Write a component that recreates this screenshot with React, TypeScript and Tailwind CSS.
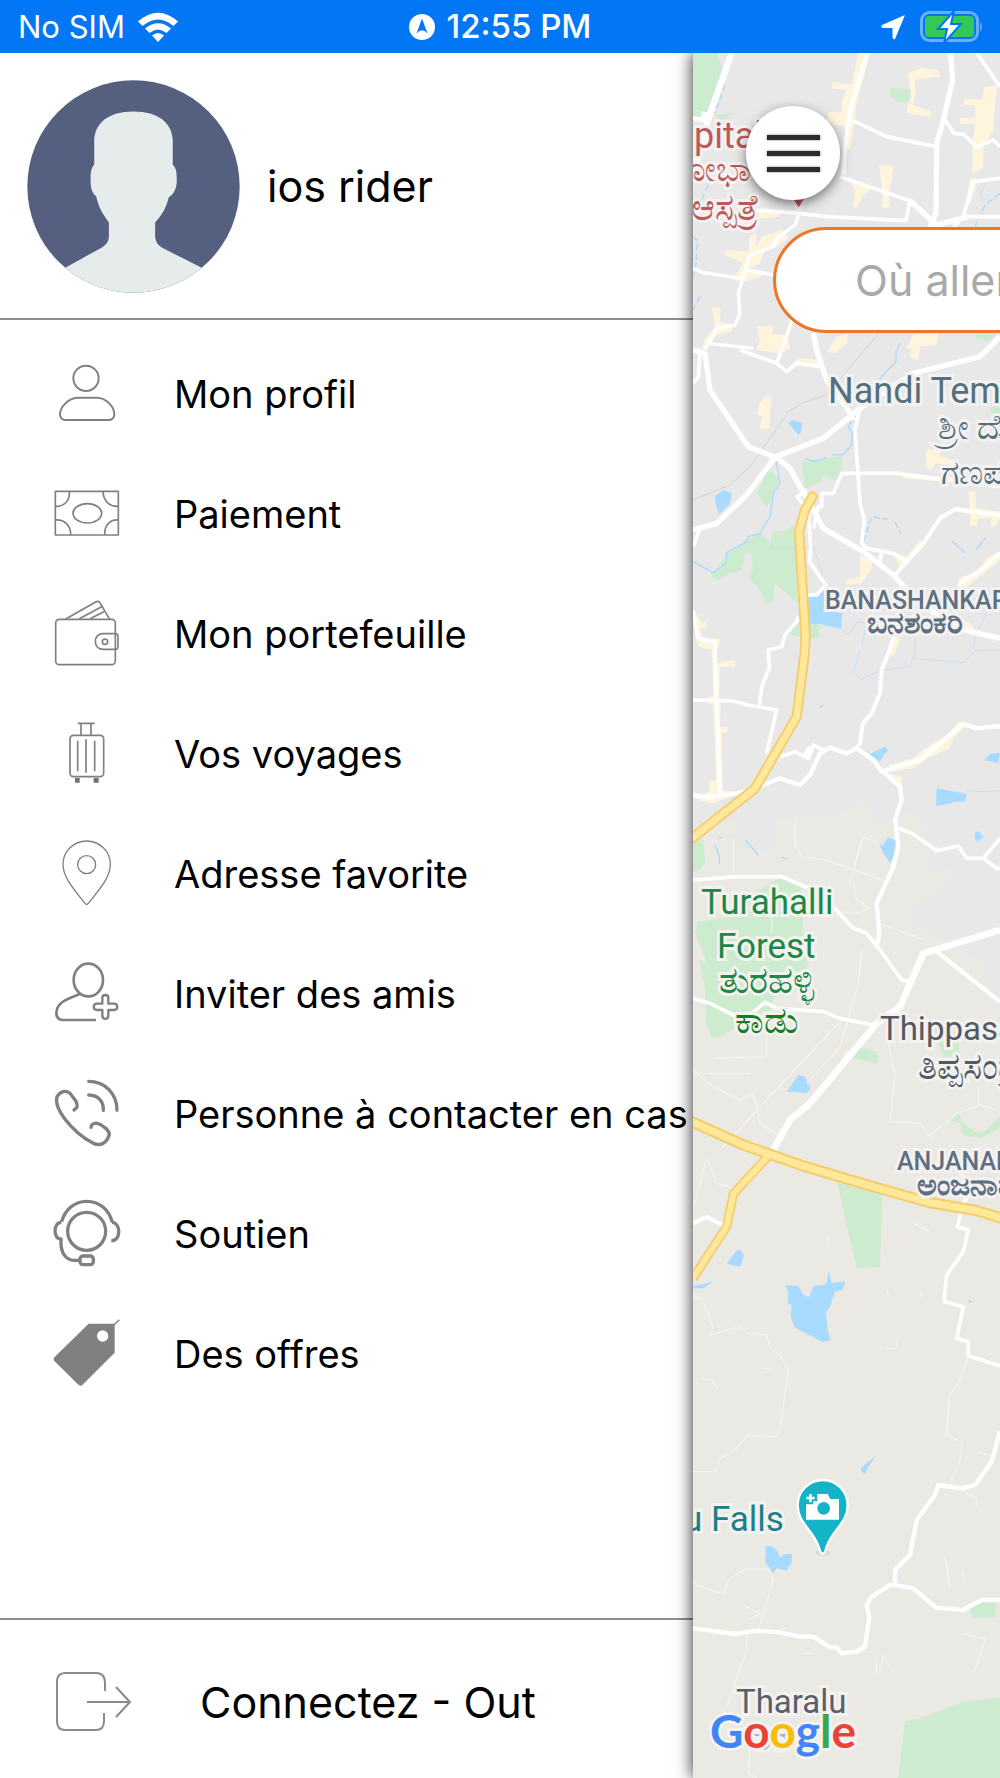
import type { ReactNode } from 'react'

type MenuItem = {
  label: string
  icon: ReactNode
}

function Icon({ box = '66 57 210 210', width = 5, children }: { box?: string; width?: number; children: ReactNode }) {
  return (
    <svg
      viewBox={box}
      className="size-[70px] shrink-0"
      fill="none"
      stroke="#808080"
      strokeWidth={width}
      strokeLinejoin="round"
      aria-hidden="true"
    >
      {children}
    </svg>
  )
}

const menu: MenuItem[] = [
  {
    label: 'Mon profil',
    icon: (
      <Icon width={6}>
        <circle cx="168" cy="115" r="38" />
        <path d="M145 173H200C230 173 253 202 253 223C253 233 246 240 235 240H108C97 240 90 233 90 223C90 202 115 173 145 173Z" />
      </Icon>
    ),
  },
  {
    label: 'Paiement',
    icon: (
      <Icon box="66 417 210 210">
        <rect x="76" y="454" width="189" height="131" />
        <ellipse cx="172" cy="520" rx="43" ry="29" />
        <path d="M118 454C120 482 103 500 76 499M219 454C220 483 238 500 265 499M76 540C103 538 123 556 122 585M265 540C240 538 223 556 224 585" />
      </Icon>
    ),
  },
  {
    label: 'Mon portefeuille',
    icon: (
      <Icon box="66 777 210 210">
        <rect x="77" y="838" width="179" height="136" rx="11" />
        <path d="M106 838L197 786Q206 781 211 790L239 838M148 836L215 800M180 836L222 815" />
        <path d="M256 881H220C205 881 196 891 196 904C196 918 205 928 220 928H257Q264 928 264 919V890Q264 881 256 881Z" />
        <circle cx="225" cy="905" r="8" />
      </Icon>
    ),
  },
  {
    label: 'Vos voyages',
    icon: (
      <Icon>
        <path d="M143 70H194M153 70V106M183 70V106M143 122V214M168 118V218M194 122V214" />
        <rect x="120" y="106" width="101" height="124" rx="10" />
        <path d="M135 234H149V248H135ZM191 234H206V248H191Z" fill="#707070" stroke="none" />
      </Icon>
    ),
  },
  {
    label: 'Adresse favorite',
    icon: (
      <Icon box="66 417 210 210" width={4}>
        <path d="M170 614Q166 612 160 604C130 565 99 532 99 493C99 454 131 423 170 423C209 423 241 454 241 493C241 532 210 565 180 604Q174 612 170 614Z" />
        <circle cx="170" cy="494" r="27" />
      </Icon>
    ),
  },
  {
    label: 'Inviter des amis',
    icon: (
      <Icon box="66 777 210 210" width={8}>
        <ellipse cx="175" cy="840" rx="44" ry="49" />
        <path d="M149 882L115 896C91 906 79 919 79 939C79 952 86 960 100 960H198" />
        <path
          strokeWidth="7"
          d="M217 894C217 882 235 882 235 894V911H252C265 911 265 930 252 930H235V946C235 960 217 960 217 946V930H201C188 930 188 911 201 911H217Z"
        />
      </Icon>
    ),
  },
  {
    label: "Personne à contacter en cas d'urgence",
    icon: (
      <Icon width={10}>
        <path
          strokeLinecap="round"
          d="M132 150C143 144 144 138 138 124L120 100C108 90 91 93 81 110C76 126 85 150 104 176C130 210 156 232 190 250C212 259 229 250 237 227C242 214 227 204 212 194C197 186 184 190 183 202"
        />
        <path strokeLinecap="round" d="M176 64C225 64 261 101 261 151M176 105C205 106 221 123 220 151" />
      </Icon>
    ),
  },
  {
    label: 'Soutien',
    icon: (
      <Icon box="66 417 210 210" width={10}>
        <circle cx="170" cy="514" r="57" />
        <path d="M95 485C105 449 133 424 170 424C208 424 237 449 247 487M94 487C69 486 69 539 93 537V548C93 580 108 600 132 601H148M246 487C273 488 274 543 244 542" />
        <rect x="150" y="588" width="40" height="26" rx="9" />
      </Icon>
    ),
  },
  {
    label: 'Des offres',
    icon: (
      <Icon box="66 777 210 210" width={4}>
        <path
          fill="#808080"
          stroke="none"
          fillRule="evenodd"
          d="M176 791H254V878L157 975Q152 980 146 975L73 903Q68 898 73 892ZM218 811A17 17 0 1 0 218 845A17 17 0 1 0 218 811Z"
        />
        <path d="M252 794L268 779" />
      </Icon>
    ),
  },
]

const labels = [
  { text: 'pital', style: 'left-px top-[65px] text-[36px] text-[#bb5a5c]' },
  { text: 'ಶೋಭಾ', style: '-left-[29px] top-[99px] text-[34px] text-[#bb5a5c]' },
  { text: 'ಆಸ್ಪತ್ರೆ', style: '-left-[2px] top-[137px] text-[36px] text-[#bb5a5c]' },
  { text: 'Nandi Temple', style: 'left-[135px] top-[320px] text-[36px] text-[#55707c]' },
  { text: 'ಶ್ರೀ ದೊಡ್ಡ', style: 'left-[245px] top-[357px] text-[34px] text-[#55707c]' },
  { text: 'ಗಣಪತಿ', style: 'left-[248px] top-[402px] text-[34px] text-[#55707c]' },
  { text: 'BANASHANKARI', style: 'left-[132px] top-[535px] text-[25px] font-medium text-[#5f6f82]' },
  { text: 'ಬನಶಂಕರಿ', style: 'left-[174px] top-[555px] text-[30px] font-bold text-[#5f6f82]' },
  { text: 'Turahalli', style: 'left-[8px] top-[832px] text-[35px] text-[#1c8746]' },
  { text: 'Forest', style: 'left-[24px] top-[876px] text-[35px] text-[#1c8746]' },
  { text: 'ತುರಹಳ್ಳಿ', style: 'left-[26px] top-[910px] text-[36px] text-[#1c8746]' },
  { text: 'ಕಾಡು', style: 'left-[42px] top-[950px] text-[36px] text-[#118020]' },
  { text: 'Thippasandra', style: 'left-[187px] top-[959px] text-[33px] text-[#535a63]' },
  { text: 'ತಿಪ್ಪಸಂದ್ರ', style: 'left-[225px] top-[996px] text-[36px] text-[#535a63]' },
  { text: 'ANJANAPURA', style: 'left-[204px] top-[1096px] text-[25px] font-medium text-[#5f6f82]' },
  { text: 'ಅಂಜನಾಪುರ', style: 'left-[224px] top-[1117px] text-[30px] font-bold text-[#5f6f82]' },
  { text: 'u Falls', style: '-left-[10px] top-[1449px] text-[35px] text-[#1b8088]' },
  { text: 'Tharalu', style: 'left-[43px] top-[1632px] text-[33px] text-[#5a6069]' },
  { text: 'ತರಳು', style: 'left-[60px] top-[1668px] text-[34px] text-[#b5b5b5]' },
]

const google = [
  { char: 'G', style: 'text-[#4285f4]' },
  { char: 'o', style: 'text-[#ea4335]' },
  { char: 'o', style: 'text-[#fbbc05]' },
  { char: 'g', style: 'text-[#4285f4]' },
  { char: 'l', style: 'text-[#34a853]' },
  { char: 'e', style: 'text-[#ea4335]' },
]

function StatusBar() {
  return (
    <header className="relative z-20 grid h-[53px] shrink-0 grid-cols-3 items-center bg-[#0277f6] px-[18px] text-[31px] leading-none text-white">
      <div className="flex items-center gap-3">
        <span>No SIM</span>
        <svg viewBox="0 0 42 30" className="h-[30px] w-[42px]" fill="#fff" aria-label="Wi-Fi">
          <path d="M1 9.500Q21-8 41 9.500L36.500 14Q21 1 5.500 14Z" />
          <path d="M8 16.500Q21 6 34 16.500L29.500 21Q21 14 12.500 21Z" />
          <path d="M15 23.500Q21 18.500 27 23.500L21 30Z" />
        </svg>
      </div>
      <div className="flex items-center justify-center gap-3 text-[33px] font-medium">
        <svg viewBox="0 0 26 26" className="size-[26px]" aria-hidden="true">
          <circle cx="13" cy="13" r="13" fill="#fff" />
          <path d="M13 4.500L18.500 19.500Q13 13 7.500 19.500Z" fill="#0277f6" />
        </svg>
        <span>12:55 PM</span>
      </div>
      <div className="flex items-center justify-end gap-3">
        <svg viewBox="0 0 26 26" className="size-[26px]" fill="#fff" aria-hidden="true">
          <path d="M25 1L15 25Q13 26 12.500 23V14H3Q0 13 2 11Z" />
        </svg>
        <svg viewBox="0 0 64 32" className="h-[32px] w-[64px]" aria-label="Batterie">
          <rect x="3.500" y="1.500" width="56" height="28" rx="8" fill="none" stroke="#69aff9" strokeWidth="3" />
          <path d="M62 11Q66 15.500 62 21Z" fill="#69aff9" />
          <rect x="7" y="5" width="49" height="21" rx="4" fill="#34c759" />
          <path d="M36 0L20 18H29L26 32L43 13H33Z" fill="#fff" stroke="#0277f6" strokeWidth="2" />
        </svg>
      </div>
    </header>
  )
}

function Avatar() {
  return (
    <svg viewBox="80 60 640 640" className="size-[213px] shrink-0" aria-label="Photo de profil">
      <clipPath id="avatar">
        <circle cx="400" cy="380" r="319" />
      </clipPath>
      <g clipPath="url(#avatar)">
        <rect x="80" y="60" width="640" height="640" fill="#555f7f" />
        <path
          fill="#e6ecec"
          d="M400 155C475 155 518 190 518 245V315C530 325 530 345 530 365C530 385 520 405 506 412C498 445 485 465 465 488V530C467 550 475 558 492 567L605 624L640 720H160L195 624L305 563C320 553 326 545 326 528V488C305 460 295 440 288 410C275 400 271 385 271 360C271 340 272 325 282 315V245C282 190 325 155 400 155Z"
        />
      </g>
    </svg>
  )
}

function MapDrawing() {
  return (
    <svg
      viewBox="39 9 921 5175"
      preserveAspectRatio="xMinYMin slice"
      className="absolute inset-0 h-full w-full"
      fill="none"
      strokeLinejoin="round"
      aria-hidden="true"
    >
      <rect x="39" y="9" width="3000" height="6000" fill="#e8e8e8" />
      <path
        fill="#eae9e4"
        d="M39 2370L100 2315L165 2310L170 2390L280 2410L290 2310L480 2290L560 2245L580 2330L640 2300L700 2285L740 2340V2470L820 2450L780 2520L700 2560V2620L800 2680L910 2740L920 2800L960 2860H3000V6000H39Z"
      />

      {/* parks */}
      <g fill="#cdebcf">
        <path d="M39 9H110L128 60L82 195L39 203ZM105 195L160 190L120 212ZM630 115L692 117L685 157L650 155L632 140ZM885 850H955L925 872L890 868ZM465 345H482L475 358Z" />
        <path d="M365 1235L487 1218L483 1275L465 1290L430 1275L425 1295L375 1315ZM262 1258L300 1285L262 1372L232 1330ZM935 1070H960V1090H932Z" />
        <path d="M92 1580L140 1515L240 1448L270 1488L278 1445L320 1443L338 1425L345 1440L352 1660L285 1600L278 1658L258 1662L240 1620L205 1585L218 1560L215 1510L205 1502L193 1515L185 1562L150 1570L115 1590ZM325 1750L355 1720L420 1722L418 1765H370Z" />
        <path d="M39 2360L70 2370L75 2440L60 2460L39 2465ZM45 2650L55 2615L150 2600L245 2515L300 2484L362 2515L370 2640L365 2700L385 2740L380 2760L340 2830L280 2840L275 2880L230 2890L130 2955L98 2965L78 2920L75 2820L65 2760L55 2730L80 2740L70 2710Z" />
        <path d="M510 3005L530 2990L592 3005V3042L510 3020ZM760 2940L800 2930L840 2960L835 3020H790ZM805 3225L835 3190L850 3220L890 3250L920 3240L960 3200V3235L900 3265L850 3255L840 3220L820 3212ZM470 3390L607 3430L600 3650L530 3655L515 3590Z" />
        <path d="M675 5015L720 5005L850 4955L960 4943H1400V5300H640ZM868 4680L890 4655H950L945 4703H880Z" />
      </g>

      {/* built-up areas */}
      <g fill="#fef5dc">
        <path d="M535 9H570L555 70L530 160L510 300H495V230L440 215L445 187H485L487 150L500 120L455 115L457 95L515 105Z" />
        <path d="M683 70L720 55L778 60V80L735 85L705 90L707 125L700 165L755 185L750 200L680 188L683 165L695 140ZM915 110L950 107L940 240L910 290V350L895 365H877L878 285L885 222H840V203H885V165H852V147H905Z" />
        <path d="M510 390L545 395L570 420L545 440L530 475L520 470L525 420ZM598 345L640 350L635 395L625 430L630 470L605 475L608 440ZM870 385L892 385L885 420L870 460L858 452ZM232 480H290L300 500L240 505Z" />
        <path d="M210 555L230 552L228 590L245 560L305 540L325 565L290 590L255 600L240 640L210 655L245 665V680L185 695L160 690L190 640L135 615L140 600L205 605Z" />
        <path d="M95 770L122 775L120 815L160 825L155 845L110 855L90 885L65 900L75 865L105 835ZM230 828L280 830L275 852L320 855L330 895L300 910L230 900L240 870ZM470 860L505 850L500 880L465 910L440 905ZM700 855L775 850L770 885L720 890L715 930L690 920L695 895H680Z" />
        <path d="M260 1035L275 1045L270 1085V1135L240 1138L245 1100L232 1090L238 1060ZM350 925L430 930V955L340 945ZM740 1197L780 1200V1220L820 1230V1245L765 1240L755 1262L738 1250ZM665 1268L750 1278L960 1290V1315L850 1300L670 1285ZM865 1325L885 1322L888 1375L960 1385V1405L945 1430L930 1425L935 1405H895L890 1428L868 1425L873 1395L820 1370L870 1375Z" />
        <path d="M540 1515L578 1530L575 1555L545 1600L500 1605L497 1590L540 1580ZM640 1505L680 1520L720 1470L740 1480L660 1560ZM835 1585L895 1565L920 1525L960 1505V1530L900 1580L850 1620L840 1600ZM42 1680L65 1715H80V1735H60L65 1765L122 1768L110 1800V1840L165 1830V1850L120 1850L118 1950L122 1970L120 2030H143V2045L125 2050L128 2220L180 2230L95 2260L39 2245L88 2225V2195L108 2190L100 1965L82 1960V1945L100 1935L95 1800L55 1790L45 1750ZM750 1680L800 1690L880 1725V1750L780 1740ZM635 1755L660 1765L640 1820L620 1810Z" />
        <path d="M625 2145L700 2125L735 2095L800 2055L835 2015L868 2018L820 2065L810 2095L750 2120L700 2155L630 2165ZM620 2170L665 2180V2210H650ZM500 3000L520 3015L465 3080Z" />
      </g>

      {/* lakes and streams */}
      <g fill="#a9daff">
        <path d="M325 1120L335 1110L368 1118L362 1148L355 1155ZM105 1338L130 1320L155 1330L150 1360L118 1393L108 1365ZM385 1640L437 1618L440 1680L487 1690L483 1737L420 1722H387ZM418 1968L432 1965L425 1975Z" />
        <path d="M568 2112L615 2090L624 2100L598 2135L580 2120ZM912 2130L930 2112L960 2108L955 2140ZM770 2215L860 2232L855 2255H825L790 2265L768 2267ZM883 2350L895 2343L910 2360L895 2375L885 2368ZM597 2380L610 2382L625 2362L648 2372L640 2420L630 2440L610 2410ZM320 3125L355 3075L375 3080L392 3115L380 3130L345 3125Z" />
        <path d="M140 3640L172 3600H182L192 3615L180 3650L155 3645ZM316 3705L355 3708L370 3735L388 3742L400 3708L430 3705L440 3700L446 3665L455 3700L495 3693L490 3718L465 3725L450 3770L438 3785L443 3840L452 3870L430 3877L345 3833L332 3800L335 3765L323 3760L325 3730ZM39 3708L100 3695L70 3715H39ZM543 4255L560 4240L587 4217L565 4250L555 4272L545 4265ZM865 3750L880 3755L868 3760Z" />
        <path d="M258 4488L272 4488L290 4500L300 4522L315 4512H336L335 4540L318 4562L290 4555L280 4570L255 4535Z" />
      </g>
      <g stroke="#a9daff" strokeWidth="4">
        <path d="M648 900V935L600 985V1000M528 1095L505 1130L517 1150L515 1185L490 1213L455 1215M440 1222L405 1235L375 1225M289 1235L300 1300L280 1330L270 1400L240 1450L205 1460L200 1475L140 1508L137 1540L100 1568L39 1535M815 1472L855 1508M888 1498L918 1462M105 2385L118 2420V2442M115 2362H128M155 2362H165M196 2370L235 2415M303 2423L323 2426" />
        <path d="M135 105L105 190M85 405L62 455M39 560L52 570L48 640L39 690M60 740L39 780M660 880L648 905M960 430L915 465L885 530M550 1475L575 1400L625 1408M645 1415L662 1450" strokeDasharray="20 8" />
        <path d="M915 400L903 430L908 462M240 1450L280 1495L400 1492L425 1560V1620M485 1740L500 1755L535 1715L560 1722L545 1790M920 1690L890 1750L880 1800M705 1765V1810L690 1850L600 1862L545 1888L520 1870L540 1800M700 1825L850 1838L885 1802L960 1800M860 2222L910 2225L960 2222" strokeWidth="3" opacity=".55" />
      </g>
      <path stroke="#d4d4d4" strokeWidth="3" d="M39 1350L150 1305L215 1245L325 1085L370 1058L440 1035L600 845" />

      {/* minor tracks */}
      <g stroke="#f4f3ef" strokeWidth="4">
        <path d="M160 2360V2470M345 2310V2380L365 2420L440 2430L620 2495M550 2360L510 2500M550 2360L610 2385M545 2370L525 2440M520 2500L530 2550L570 2575L530 2590L480 2585M600 2620L730 2668M275 2600V2650M545 2700L535 2800L480 2990L380 3100M480 2915L400 3000L120 3300M39 3060L100 3110L180 3150L220 3130L240 3220L300 3260M110 3025L260 3020V2960M39 3070H210M620 2960L645 3080L630 3215L720 3220L760 3270M895 3170V3110M750 3255L830 3190L900 3165L950 3180" />
        <path d="M39 3740L65 3745L98 3830L92 3855L180 3830L205 3850L260 3855L270 3895L300 3915L325 3960L300 4140L290 4160L205 4155L165 4200L120 4225L108 4265H39M862 3925L840 3990L808 4040L800 4155L847 4177L840 4230L810 4300M39 4600L130 4632L145 4590L195 4557H265L280 4590L235 4740M200 4750V4800L140 4970M210 5090L205 5170L230 5184M78 3330L60 3400L45 3460M80 3325L110 3400L180 3420" />
        <path d="M725 3720V3745M620 3720L625 3738M655 3860L645 3898L618 3893M250 3955H280M65 3985L95 3990L115 4015M850 4750L915 4768L880 4870M600 4870L610 4815L630 4850M370 4810H400M590 4830V4870M180 4660L240 4690L205 4710M795 4520L810 4610M850 4560V4590M845 4320L890 4345V4370M895 4205L945 4220M700 3520L750 3545M440 3550L448 3580" />
      </g>

      {/* roads */}
      <g stroke="#fff" strokeWidth="11">
        <path strokeWidth="19" d="M155 9L90 190L39 370M75 185L70 215" />
        <path strokeWidth="13" d="M562 9L510 180L495 290L490 375M39 205L90 215" />
        <path strokeWidth="16" d="M812 9L818 90L790 210L770 280L768 490L750 530M690 452L770 525L865 500" />
        <path d="M890 9L960 110M795 210L822 250L850 253L890 290L940 270L960 290M505 205L620 260L770 290M480 380L690 452L678 512L440 500L360 490L230 480M960 385L880 395L850 500L820 530M850 500H960" />
        <path d="M358 490L345 525L292 565L280 590L210 615L175 730L180 790L165 825L110 835L75 900M39 655L70 668L185 685L200 660L280 675M85 880L220 895M340 800L305 900" strokeWidth="10" />
        <path strokeWidth="16" d="M39 900L75 910L90 1020L205 1190L285 1222L430 1165L540 1075L700 970L900 920L925 895L960 860M290 1222L330 1255L430 1435L550 1505L640 1575L700 1640L830 1735L960 1765" />
        <path strokeWidth="16" d="M285 1222L200 1335L110 1420L39 1440M400 850L410 900L440 990L505 1080L520 1110" />
        <path d="M180 900L290 940L320 965L350 940L420 950M290 940L305 900M60 910L55 980L39 1000M60 1435L39 1490M540 1070L525 1140L540 1360L553 1410L545 1480L560 1495L640 1510L680 1535M605 1510L598 1540M400 1435L415 1370H425V1330H460L485 1270H650L960 1310M375 1370L352 1340L380 1320M385 1380L392 1500L388 1535L437 1605L410 1635L385 1635" />
        <path strokeWidth="12" d="M645 1575L730 1480L780 1405L825 1378L960 1395M690 1640L760 1690M960 1510L895 1565L840 1600L835 1650M645 1755L625 1810L605 1860L600 1930L575 1990L548 2020L540 2080L525 2100" />
        <path d="M355 1700L350 1715L315 1755L305 1790L265 1800L268 1855L245 1910L238 1965M39 1680L55 1765L105 1775L108 1800M39 1950L160 1953L200 1965L290 1980L260 2110M105 1800L120 2240M300 2120L345 2105L385 2125L400 2085L430 2100M375 2115L390 2090" />
        <path strokeWidth="13" d="M39 2235L85 2242L200 2225L300 2185L360 2205L390 2175L420 2110L450 2093L500 2110L530 2095L580 2130L605 2165L720 2130L850 2022L890 2035L960 2028M610 2165L660 2210L665 2250L645 2310L655 2390L640 2450L590 2560L598 2650L590 2690" />
        <path d="M655 2335L695 2350L770 2402L835 2388L860 2425H910L960 2365M910 2425L950 2455H960" />
        <path d="M39 2490L170 2480H305L400 2520L440 2550L520 2635L560 2650L600 2700L665 2790L690 2795M39 2845L90 2860L160 2895L215 2890L255 2857L290 2875L430 2885L480 2905L580 2925" />
        <path strokeWidth="20" d="M960 2640L730 2710L660 2870L590 2920L390 3160L330 3210L280 3300" />
        <path strokeWidth="13" d="M770 2705L960 2855M39 3520L80 3502L135 3528" />
        <path d="M890 3400L850 3460L832 3530L865 3540L850 3605L800 3675L792 3755L850 3770L830 3865L865 3875V3917L960 3948" />
        <path strokeWidth="13" d="M960 4145L935 4235L885 4305L845 4315L775 4305L765 4335L710 4410L690 4515L645 4560V4605L700 4615L768 4673L850 4680L905 4650H960M645 4605H630L575 4640L560 4665L568 4700L555 4790L530 4805L485 4810L470 4792H450L400 4760H360L300 4747L230 4742L165 4752L39 4735" />
      </g>

      {/* highways */}
      <g stroke="#f5cd68">
        <path strokeWidth="28" d="M265 3318L160 3432L140 3530L39 3685" />
        <path strokeWidth="31" strokeLinecap="round" d="M397 1340L375 1380L357 1445L377 1760L374 1810L350 2000L225 2215L20 2378" />
        <path strokeWidth="34" d="M20 3208L190 3285L370 3348L580 3410L750 3458L890 3482L1000 3515" />
      </g>
      <g stroke="#ffe89b">
        <path strokeWidth="18" d="M265 3318L160 3432L140 3530L39 3685" />
        <path strokeWidth="20" strokeLinecap="round" d="M397 1340L375 1380L357 1445L377 1760L374 1810L350 2000L225 2215L20 2378" />
        <path strokeWidth="22" d="M20 3208L190 3285L370 3348L580 3410L750 3458L890 3482L1000 3515" />
      </g>

      {/* pins */}
      <path d="M325 430H387L356 480Z" fill="#c4585b" stroke="#f0eeee" strokeWidth="8" />
      <ellipse cx="428" cy="4508" rx="22" ry="9" fill="#dbdad6" />
      <path
        fill="#14b4c8"
        stroke="#fff"
        strokeWidth="7"
        d="M428 4511C420 4511 420 4500 416 4490C400 4440 353 4420 353 4366C353 4325 386 4290 428 4290C470 4290 503 4325 503 4366C503 4420 456 4440 440 4490C436 4500 436 4511 428 4511Z"
      />
      <path
        fill="#fff"
        fillRule="evenodd"
        d="M412 4332H443L451 4347H477V4409H378V4363H400V4354H412ZM431 4356A19 19 0 1 0 431 4394A19 19 0 1 0 431 4356Z"
      />
      <path d="M379 4344H404M391 4332V4357" stroke="#fff" strokeWidth="8" />
    </svg>
  )
}

function MapPanel() {
  return (
    <section className="relative z-10 min-w-0 shadow-[0_0_16px_rgba(0,0,0,0.85)]">
      <div className="absolute inset-0 overflow-hidden">
        <MapDrawing />
        <div className="font-['Roboto',sans-serif] leading-none whitespace-nowrap [paint-order:stroke] [-webkit-text-stroke:6px_#f3f2f0]">
          {labels.map((label) => (
            <span key={label.text} className={`absolute leading-none ${label.style}`}>
              {label.text}
            </span>
          ))}
          <span className="absolute top-[1655px] left-[17px] font-['Lato',sans-serif] text-[46px] leading-none font-bold">
            {google.map((letter, i) => (
              <span key={i} className={letter.style}>
                {letter.char}
              </span>
            ))}
          </span>
        </div>
      </div>

      <div className="relative flex flex-col items-start gap-[27px] overflow-hidden pt-[53px] pb-10">
        <button
          type="button"
          aria-label="Menu"
          className="ml-[53px] flex size-[94px] flex-col items-center justify-center gap-[11px] rounded-full bg-white shadow-[0_4px_12px_rgba(0,0,0,0.5)]"
        >
          <span className="h-[5px] w-[53px] bg-[#2b2c2e] shadow-[0_0_2px_#555]" />
          <span className="h-[5px] w-[53px] bg-[#2b2c2e] shadow-[0_0_2px_#555]" />
          <span className="h-[5px] w-[53px] bg-[#2b2c2e] shadow-[0_0_2px_#555]" />
        </button>
        <input
          type="text"
          aria-label="Destination"
          placeholder="Où aller ?"
          className="ml-[80px] h-[106px] w-[600px] shrink-0 rounded-full border-[3px] border-[#f27427] bg-white pl-[79px] text-[43px] text-black outline-none placeholder:text-[#a9a9a9]"
        />
      </div>
    </section>
  )
}

export default function App() {
  return (
    <div className="flex min-h-screen flex-col bg-white font-['Inter',sans-serif] text-black">
      <StatusBar />
      <main className="grid flex-1 grid-cols-[693fr_307fr]">
        <aside className="flex min-w-0 flex-col overflow-hidden">
          <div className="flex items-center gap-[27px] border-b-2 border-[#8f8f8f] px-[27px] pt-[27px] pb-[25px]">
            <Avatar />
            <h1 className="text-[43px] leading-none">ios rider</h1>
          </div>

          <nav className="flex-1 pt-[14px]">
            <ul>
              {menu.map((item) => (
                <li key={item.label}>
                  <a href="#" className="flex h-[120px] items-center gap-[52px] pl-[52px] text-[38px] whitespace-nowrap">
                    {item.icon}
                    {item.label}
                  </a>
                </li>
              ))}
            </ul>
          </nav>

          <button
            type="button"
            className="flex h-[160px] items-center gap-[66px] border-t-2 border-[#8f8f8f] pt-[6px] pl-[54px] text-[43px] whitespace-nowrap"
          >
            <svg viewBox="0 0 80 64" className="h-[64px] w-[80px]" fill="none" stroke="#8a8a8a" strokeWidth="2" aria-hidden="true">
              <path d="M51 21V13Q51 3 42 3H11Q3 3 3 12V51Q3 60 11 60H42Q50 60 50 51V43" />
              <path d="M33 32H76M62 17L76 32L62 47" />
            </svg>
            Connectez - Out
          </button>
        </aside>
        <MapPanel />
      </main>
    </div>
  )
}
